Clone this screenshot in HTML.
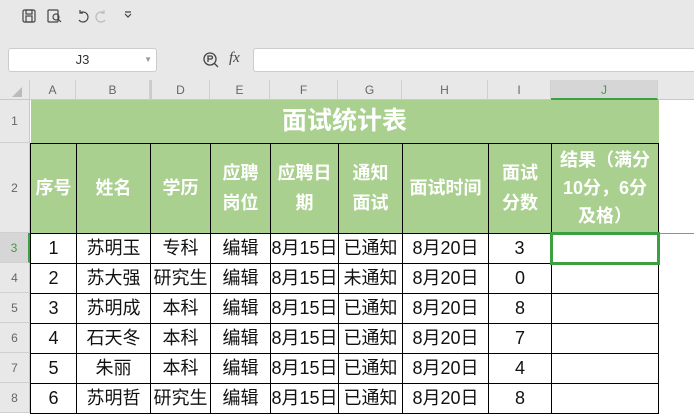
<!DOCTYPE html><html><head><meta charset="utf-8"><style>
*{margin:0;padding:0;box-sizing:border-box}
body{width:694px;height:411px;overflow:hidden;background:#fff;position:relative;font-family:"Liberation Sans","Noto Sans CJK SC",sans-serif}
.top{position:absolute;left:0;top:0;width:694px;height:80px;background:#e8e8e8}
.nb{position:absolute;left:8px;top:48px;width:149px;height:24px;background:#fff;border:1px solid #ccc;border-radius:3px;font-size:13px;text-align:center;line-height:22px;color:#333}
.fb{position:absolute;left:253px;top:48px;width:450px;height:24px;background:#fff;border:1px solid #ccc;border-radius:3px}
.ch{position:absolute;top:80px;height:20px;background:#e8e8e8;font-size:12px;color:#666;text-align:center;line-height:20px;border-right:1px solid #d0d0d0;border-bottom:1px solid #c8c8c8}
.rh{position:absolute;left:0;width:30px;background:#e8e8e8;font-size:12px;color:#666;text-align:center;border-bottom:1px solid #d0d0d0;border-right:1px solid #c8c8c8}
table{position:absolute;left:30px;top:100px;border-collapse:collapse;table-layout:fixed}
td{border:1px solid #000;text-align:center;font-size:18px;color:#111;height:30px;padding:0;line-height:20px}
.g td{background:#a9d08e;color:#fff;font-weight:bold;line-height:30px}
</style></head><body>
<div class="top">
<svg width="160" height="30" style="position:absolute;left:18px;top:6px" fill="none" stroke="#444" stroke-width="1.2">
<rect x="5" y="4" width="12" height="12" rx="1.5"/><rect x="8" y="4" width="6" height="4"/><rect x="8" y="10" width="6" height="6"/>
<rect x="30" y="4" width="10" height="12" rx="1"/><circle cx="38" cy="11" r="3"/><path d="M40 13l3 3"/>
<path d="M62 7a5 5 0 1 1 -1 7M62 4v3h3"/>
<path d="M86 7a5 5 0 1 0 1 7M86 4v3h-3" stroke="#bbb"/>
<path d="M107 8l3 3l3-3M107 6h6"/>
</svg>
<div class="nb">J3<span style="position:absolute;right:4px;font-size:8px;color:#999">▼</span></div>
<svg width="20" height="20" style="position:absolute;left:201px;top:50px" fill="none" stroke="#444" stroke-width="1.3"><circle cx="9" cy="9" r="6"/><path d="M13 13l4 4M7 12V6h3a1.5 1.5 0 0 1 0 3H7"/></svg>
<div style="position:absolute;left:229px;top:50px;font-style:italic;font-size:15px;color:#444;font-family:'Liberation Serif',serif">fx</div>
<div class="fb"></div>
</div>
<div class="ch" style="left:0;width:30px"><svg width="30" height="20"><path d="M22 17h-10l10-10z" fill="#bbb"/></svg></div>
<div class="ch" style="left:30px;width:46px">A</div>
<div class="ch" style="left:76px;width:74px">B</div>
<div class="ch" style="left:150px;width:60px;border-left:2px solid #ccc">D</div>
<div class="ch" style="left:210px;width:60px">E</div>
<div class="ch" style="left:270px;width:68px">F</div>
<div class="ch" style="left:338px;width:64px">G</div>
<div class="ch" style="left:402px;width:86px">H</div>
<div class="ch" style="left:488px;width:63px">I</div>
<div class="ch" style="left:551px;width:107px;background:#d6d6d6;border-bottom:2px solid #3aa042;color:#3aa042">J</div>
<div class="ch" style="left:658px;width:36px;border-right:none"></div>
<div class="rh" style="top:100px;height:43px;line-height:43px">1</div>
<div class="rh" style="top:143px;height:90px;line-height:90px">2</div>
<div class="rh" style="top:233px;height:30px;line-height:30px;background:#d6d6d6;color:#3aa042;border-right:2px solid #3aa042">3</div>
<div class="rh" style="top:263px;height:30px;line-height:30px">4</div>
<div class="rh" style="top:293px;height:30px;line-height:30px">5</div>
<div class="rh" style="top:323px;height:30px;line-height:30px">6</div>
<div class="rh" style="top:353px;height:30px;line-height:30px">7</div>
<div class="rh" style="top:383px;height:30px;line-height:30px">8</div>
<div style="position:absolute;left:658px;top:233px;width:36px;border-top:1px solid #6ab04c"></div>
<table>
<colgroup><col style="width:46px"><col style="width:74px"><col style="width:60px"><col style="width:60px"><col style="width:68px"><col style="width:64px"><col style="width:86px"><col style="width:63px"><col style="width:107px"></colgroup>
<tr class="g"><td colspan="9" style="height:43px;font-size:25px;border:none;border-bottom:1px solid #000">面试统计表</td></tr>
<tr class="g" style="height:90px"><td>序号</td><td>姓名</td><td>学历</td><td>应聘<br>岗位</td><td>应聘日<br>期</td><td>通知<br>面试</td><td>面试时间</td><td>面试<br>分数</td><td style="line-height:28px">结果（满分<br>10分，6分<br>及格）</td></tr>
<tr><td>1</td><td>苏明玉</td><td>专科</td><td>编辑</td><td>8月15日</td><td>已通知</td><td>8月20日</td><td>3</td><td style="border:3px solid #3aa042"></td></tr>
<tr><td>2</td><td>苏大强</td><td>研究生</td><td>编辑</td><td>8月15日</td><td>未通知</td><td>8月20日</td><td>0</td><td></td></tr>
<tr><td>3</td><td>苏明成</td><td>本科</td><td>编辑</td><td>8月15日</td><td>已通知</td><td>8月20日</td><td>8</td><td></td></tr>
<tr><td>4</td><td>石天冬</td><td>本科</td><td>编辑</td><td>8月15日</td><td>已通知</td><td>8月20日</td><td>7</td><td></td></tr>
<tr><td>5</td><td>朱丽</td><td>本科</td><td>编辑</td><td>8月15日</td><td>已通知</td><td>8月20日</td><td>4</td><td></td></tr>
<tr><td>6</td><td>苏明哲</td><td>研究生</td><td>编辑</td><td>8月15日</td><td>已通知</td><td>8月20日</td><td>8</td><td></td></tr>
</table>
</body></html>
